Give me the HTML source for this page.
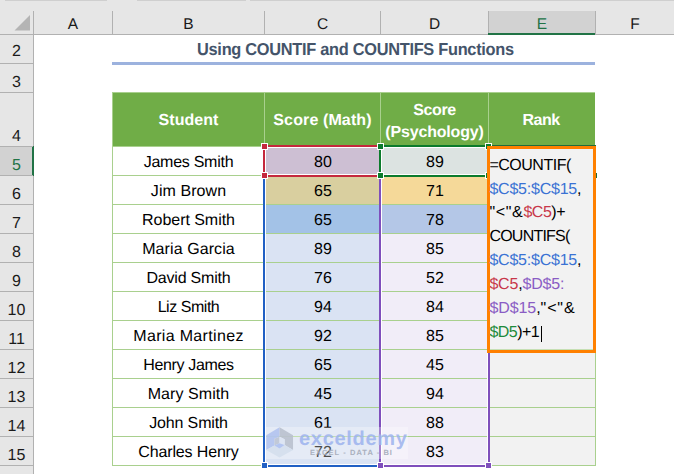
<!DOCTYPE html>
<html><head><meta charset="utf-8"><title>COUNTIF</title>
<style>
html,body{margin:0;padding:0;background:#fff;}
body{width:674px;height:474px;overflow:hidden;position:relative;font-family:"Liberation Sans",sans-serif;color:#000;text-rendering:geometricPrecision;}
div,span{box-sizing:border-box;}
.a{position:absolute;}
.hd{position:absolute;background:#e6e6e6;}
.ln{position:absolute;background:#b1b1b1;}
.rn{position:absolute;left:0;width:33px;text-align:center;font-size:16px;line-height:16px;color:#1a1a1a;}
.cl{position:absolute;top:17px;text-align:center;font-size:15.5px;line-height:16px;color:#1a1a1a;}
.c{position:absolute;text-align:center;font-size:16px;line-height:28px;color:#000;white-space:nowrap;}
.gl{position:absolute;background:#a9d08e;}
.th{position:absolute;text-align:center;color:#fff;font-weight:bold;font-size:16px;white-space:nowrap;line-height:22px;}
.hn{position:absolute;width:7px;height:7px;border:1px solid #fff;}
.f{position:absolute;left:489.4px;font-size:16px;line-height:24px;white-space:nowrap;color:#000;}
.bl{color:#3a72d4}.rd{color:#c8384a}.pu{color:#8a5cc4}.gr{color:#1d8a3a}
</style></head><body>

<div class="hd" style="left:0;top:0;width:674px;height:35px"></div>
<div class="hd" style="left:0;top:35px;width:34px;height:439px"></div>
<div class="a" style="left:5px;top:0;width:102px;height:1px;background:#cfcfcf"></div>
<div class="a" style="left:137px;top:0;width:109px;height:1px;background:#cfcfcf"></div>
<div class="a" style="left:250px;top:0;width:424px;height:1px;background:#cfcfcf"></div>
<div class="a" style="left:489px;top:11px;width:106px;height:24px;background:#d2d2d2"></div>
<div class="a" style="left:0;top:147px;width:33px;height:29px;background:#d2d2d2"></div>
<div class="ln" style="left:0;top:34px;width:489px;height:1px"></div>
<div class="ln" style="left:595px;top:34px;width:79px;height:1px"></div>
<div class="ln" style="left:33px;top:11px;width:1px;height:136px"></div>
<div class="ln" style="left:33px;top:176px;width:1px;height:298px"></div>
<div class="ln" style="left:112px;top:11px;width:1px;height:23px"></div>
<div class="ln" style="left:264px;top:11px;width:1px;height:23px"></div>
<div class="ln" style="left:380px;top:11px;width:1px;height:23px"></div>
<div class="ln" style="left:488px;top:11px;width:1px;height:23px"></div>
<div class="ln" style="left:595px;top:11px;width:1px;height:23px"></div>
<div class="a" style="left:488px;top:33px;width:107px;height:2px;background:#217346"></div>
<div class="a" style="left:32px;top:146px;width:2px;height:30px;background:#217346"></div>
<div class="ln" style="left:0;top:63px;width:33px;height:1px"></div>
<div class="ln" style="left:0;top:92px;width:33px;height:1px"></div>
<div class="ln" style="left:0;top:146px;width:33px;height:1px"></div>
<div class="ln" style="left:0;top:175px;width:33px;height:1px"></div>
<div class="ln" style="left:0;top:204px;width:33px;height:1px"></div>
<div class="ln" style="left:0;top:233px;width:33px;height:1px"></div>
<div class="ln" style="left:0;top:262px;width:33px;height:1px"></div>
<div class="ln" style="left:0;top:291px;width:33px;height:1px"></div>
<div class="ln" style="left:0;top:320px;width:33px;height:1px"></div>
<div class="ln" style="left:0;top:349px;width:33px;height:1px"></div>
<div class="ln" style="left:0;top:378px;width:33px;height:1px"></div>
<div class="ln" style="left:0;top:407px;width:33px;height:1px"></div>
<div class="ln" style="left:0;top:436px;width:33px;height:1px"></div>
<div class="ln" style="left:0;top:465px;width:33px;height:1px"></div>
<svg class="a" style="left:14px;top:15px" width="17" height="16" viewBox="0 0 17 16"><polygon points="16,0 16,15.5 0.5,15.5" fill="#b4b4b4"/></svg>
<div class="cl" style="left:34px;width:78px;color:#1a1a1a">A</div>
<div class="cl" style="left:113px;width:151px;color:#1a1a1a">B</div>
<div class="cl" style="left:265px;width:115px;color:#1a1a1a">C</div>
<div class="cl" style="left:381px;width:107px;color:#1a1a1a">D</div>
<div class="cl" style="left:489px;width:106px;color:#217346">E</div>
<div class="cl" style="left:596px;width:78px;color:#1a1a1a">F</div>
<div class="rn" style="top:44px;color:#1a1a1a">2</div>
<div class="rn" style="top:75px;color:#1a1a1a">3</div>
<div class="rn" style="top:129px;color:#1a1a1a">4</div>
<div class="rn" style="top:158px;color:#217346">5</div>
<div class="rn" style="top:187px;color:#1a1a1a">6</div>
<div class="rn" style="top:216px;color:#1a1a1a">7</div>
<div class="rn" style="top:245px;color:#1a1a1a">8</div>
<div class="rn" style="top:274px;color:#1a1a1a">9</div>
<div class="rn" style="top:303px;color:#1a1a1a">10</div>
<div class="rn" style="top:332px;color:#1a1a1a">11</div>
<div class="rn" style="top:361px;color:#1a1a1a">12</div>
<div class="rn" style="top:390px;color:#1a1a1a">13</div>
<div class="rn" style="top:419px;color:#1a1a1a">14</div>
<div class="rn" style="top:448px;color:#1a1a1a">15</div>
<div class="a" style="left:114.4px;top:36.4px;width:482px;height:26px;text-align:center;font-weight:bold;font-size:17.3px;line-height:26px;color:#44546a;white-space:nowrap"><span id="title" style="display:inline-block;transform:scaleX(0.946);letter-spacing:-0.3px">Using COUNTIF and COUNTIFS Functions</span></div>
<div class="a" style="left:112px;top:62px;width:483px;height:3px;background:#9cb2de"></div>
<div class="a" style="left:112px;top:92px;width:483px;height:55px;background:#70ad47;border-top:1px solid #a9d08e;border-left:1px solid #a9d08e"></div>
<div class="a" style="left:264px;top:93px;width:1px;height:53px;background:#a9d08e"></div>
<div class="a" style="left:380px;top:93px;width:1px;height:53px;background:#a9d08e"></div>
<div class="a" style="left:488px;top:93px;width:1px;height:53px;background:#a9d08e"></div>
<div class="th" style="left:113px;width:151px;top:110px"><span id="th1" style="letter-spacing:0.06px;">Student</span></div>
<div class="th" style="left:265px;width:115px;top:110px"><span id="th2" style="letter-spacing:0.12px;">Score (Math)</span></div>
<div class="th" style="left:381px;width:107px;top:100px"><span id="th3a" style="letter-spacing:-0.35px;">Score</span><br><span id="th3b" style="letter-spacing:-0.18px;">(Psychology)</span></div>
<div class="th" style="left:488px;width:106px;top:110px"><span id="th4" style="letter-spacing:-0.48px;">Rank</span></div>
<div class="a" style="left:265px;top:147px;width:115px;height:29px;background:#cdbfd3"></div>
<div class="a" style="left:381px;top:147px;width:107px;height:29px;background:#dce3e1"></div>
<div class="a" style="left:489px;top:147px;width:106px;height:29px;background:#f2f2f2"></div>
<div class="a" style="left:265px;top:176px;width:115px;height:29px;background:#d9cf9f"></div>
<div class="a" style="left:381px;top:176px;width:107px;height:29px;background:#f5d999"></div>
<div class="a" style="left:489px;top:176px;width:106px;height:29px;background:#f2f2f2"></div>
<div class="a" style="left:265px;top:205px;width:115px;height:29px;background:#a3c2e7"></div>
<div class="a" style="left:381px;top:205px;width:107px;height:29px;background:#b4c7e7"></div>
<div class="a" style="left:489px;top:205px;width:106px;height:29px;background:#f2f2f2"></div>
<div class="a" style="left:265px;top:234px;width:115px;height:29px;background:#dae3f3"></div>
<div class="a" style="left:381px;top:234px;width:107px;height:29px;background:#f1edf8"></div>
<div class="a" style="left:489px;top:234px;width:106px;height:29px;background:#f2f2f2"></div>
<div class="a" style="left:265px;top:263px;width:115px;height:29px;background:#dae3f3"></div>
<div class="a" style="left:381px;top:263px;width:107px;height:29px;background:#f1edf8"></div>
<div class="a" style="left:489px;top:263px;width:106px;height:29px;background:#f2f2f2"></div>
<div class="a" style="left:265px;top:292px;width:115px;height:29px;background:#dae3f3"></div>
<div class="a" style="left:381px;top:292px;width:107px;height:29px;background:#f1edf8"></div>
<div class="a" style="left:489px;top:292px;width:106px;height:29px;background:#f2f2f2"></div>
<div class="a" style="left:265px;top:321px;width:115px;height:29px;background:#dae3f3"></div>
<div class="a" style="left:381px;top:321px;width:107px;height:29px;background:#f1edf8"></div>
<div class="a" style="left:489px;top:321px;width:106px;height:29px;background:#f2f2f2"></div>
<div class="a" style="left:265px;top:350px;width:115px;height:29px;background:#dae3f3"></div>
<div class="a" style="left:381px;top:350px;width:107px;height:29px;background:#f1edf8"></div>
<div class="a" style="left:489px;top:350px;width:106px;height:29px;background:#f2f2f2"></div>
<div class="a" style="left:265px;top:379px;width:115px;height:29px;background:#dae3f3"></div>
<div class="a" style="left:381px;top:379px;width:107px;height:29px;background:#f1edf8"></div>
<div class="a" style="left:489px;top:379px;width:106px;height:29px;background:#f2f2f2"></div>
<div class="a" style="left:265px;top:408px;width:115px;height:29px;background:#dae3f3"></div>
<div class="a" style="left:381px;top:408px;width:107px;height:29px;background:#f1edf8"></div>
<div class="a" style="left:489px;top:408px;width:106px;height:29px;background:#f2f2f2"></div>
<div class="a" style="left:265px;top:437px;width:115px;height:29px;background:#dae3f3"></div>
<div class="a" style="left:381px;top:437px;width:107px;height:29px;background:#f1edf8"></div>
<div class="a" style="left:489px;top:437px;width:106px;height:29px;background:#f2f2f2"></div>
<div class="gl" style="left:112px;top:146px;width:484px;height:1px"></div>
<div class="gl" style="left:112px;top:175px;width:484px;height:1px"></div>
<div class="gl" style="left:112px;top:204px;width:484px;height:1px"></div>
<div class="gl" style="left:112px;top:233px;width:484px;height:1px"></div>
<div class="gl" style="left:112px;top:262px;width:484px;height:1px"></div>
<div class="gl" style="left:112px;top:291px;width:484px;height:1px"></div>
<div class="gl" style="left:112px;top:320px;width:484px;height:1px"></div>
<div class="gl" style="left:112px;top:349px;width:484px;height:1px"></div>
<div class="gl" style="left:112px;top:378px;width:484px;height:1px"></div>
<div class="gl" style="left:112px;top:407px;width:484px;height:1px"></div>
<div class="gl" style="left:112px;top:436px;width:484px;height:1px"></div>
<div class="gl" style="left:112px;top:465px;width:484px;height:1px"></div>
<div class="gl" style="left:112px;top:146px;width:1px;height:320px"></div>
<div class="gl" style="left:264px;top:146px;width:1px;height:320px"></div>
<div class="gl" style="left:380px;top:146px;width:1px;height:320px"></div>
<div class="gl" style="left:488px;top:146px;width:1px;height:320px"></div>
<div class="gl" style="left:595px;top:146px;width:1px;height:320px"></div>
<div class="c" style="left:113px;width:151px;top:149px"><span id="n0" style="letter-spacing:-0.26px;">James Smith</span></div>
<div class="c" style="left:265.4px;width:115px;top:149px">80</div>
<div class="c" style="left:381.4px;width:107px;top:149px">89</div>
<div class="c" style="left:113px;width:151px;top:178px"><span id="n1" style="letter-spacing:0.07px;">Jim Brown</span></div>
<div class="c" style="left:265.4px;width:115px;top:178px">65</div>
<div class="c" style="left:381.4px;width:107px;top:178px">71</div>
<div class="c" style="left:113px;width:151px;top:207px"><span id="n2" style="letter-spacing:-0.05px;">Robert Smith</span></div>
<div class="c" style="left:265.4px;width:115px;top:207px">65</div>
<div class="c" style="left:381.4px;width:107px;top:207px">78</div>
<div class="c" style="left:113px;width:151px;top:236px"><span id="n3" style="letter-spacing:0.09px;">Maria Garcia</span></div>
<div class="c" style="left:265.4px;width:115px;top:236px">89</div>
<div class="c" style="left:381.4px;width:107px;top:236px">85</div>
<div class="c" style="left:113px;width:151px;top:265px"><span id="n4" style="letter-spacing:-0.19px;">David Smith</span></div>
<div class="c" style="left:265.4px;width:115px;top:265px">76</div>
<div class="c" style="left:381.4px;width:107px;top:265px">52</div>
<div class="c" style="left:113px;width:151px;top:294px"><span id="n5" style="letter-spacing:-0.46px;">Liz Smith</span></div>
<div class="c" style="left:265.4px;width:115px;top:294px">94</div>
<div class="c" style="left:381.4px;width:107px;top:294px">84</div>
<div class="c" style="left:113px;width:151px;top:323px"><span id="n6" style="letter-spacing:0.33px;">Maria Martinez</span></div>
<div class="c" style="left:265.4px;width:115px;top:323px">92</div>
<div class="c" style="left:381.4px;width:107px;top:323px">85</div>
<div class="c" style="left:113px;width:151px;top:352px"><span id="n7" style="letter-spacing:-0.34px;">Henry James</span></div>
<div class="c" style="left:265.4px;width:115px;top:352px">65</div>
<div class="c" style="left:381.4px;width:107px;top:352px">45</div>
<div class="c" style="left:113px;width:151px;top:381px"><span id="n8" style="letter-spacing:0.07px;">Mary Smith</span></div>
<div class="c" style="left:265.4px;width:115px;top:381px">45</div>
<div class="c" style="left:381.4px;width:107px;top:381px">94</div>
<div class="c" style="left:113px;width:151px;top:410px"><span id="n9" style="letter-spacing:-0.14px;">John Smith</span></div>
<div class="c" style="left:265.4px;width:115px;top:410px">61</div>
<div class="c" style="left:381.4px;width:107px;top:410px">88</div>
<div class="c" style="left:113px;width:151px;top:439px"><span id="n10" style="letter-spacing:-0.15px;">Charles Henry</span></div>
<div class="c" style="left:265.4px;width:115px;top:439px">72</div>
<div class="c" style="left:381.4px;width:107px;top:439px">83</div>
<div class="a" style="left:265px;top:147px;width:1px;height:317px;background:#fff"></div>
<div class="a" style="left:381px;top:147px;width:1px;height:317px;background:#fff"></div>
<div class="a" style="left:487px;top:353px;width:1px;height:111px;background:#fff"></div>
<div class="a" style="left:265px;top:464px;width:114px;height:1px;background:#fff"></div>
<div class="a" style="left:381px;top:464px;width:106px;height:1px;background:#fff"></div>
<div class="a" style="left:265px;top:147px;width:114px;height:1px;background:#fff"></div>
<div class="a" style="left:265px;top:174px;width:114px;height:1px;background:#fff"></div>
<div class="a" style="left:381px;top:147px;width:106px;height:1px;background:#fff"></div>
<div class="a" style="left:381px;top:174px;width:106px;height:1px;background:#fff"></div>
<div class="a" style="left:263px;top:177px;width:2px;height:290px;background:#2160c4"></div>
<div class="a" style="left:263px;top:465px;width:116px;height:2px;background:#2160c4"></div>
<div class="a" style="left:379px;top:177px;width:2px;height:290px;background:#7f4fbc"></div>
<div class="a" style="left:379px;top:465px;width:111px;height:2px;background:#7f4fbc"></div>
<div class="a" style="left:488px;top:353px;width:2px;height:114px;background:#7f4fbc"></div>
<div class="a" style="left:263px;top:145px;width:116px;height:2px;background:#c5283d"></div>
<div class="a" style="left:263px;top:145px;width:2px;height:32px;background:#c5283d"></div>
<div class="a" style="left:263px;top:175px;width:116px;height:2px;background:#c5283d"></div>
<div class="a" style="left:379px;top:145px;width:110px;height:2px;background:#0c7b2c"></div>
<div class="a" style="left:379px;top:145px;width:2px;height:32px;background:#0c7b2c"></div>
<div class="a" style="left:379px;top:175px;width:110px;height:2px;background:#0c7b2c"></div>
<div class="a" style="left:489px;top:145px;width:107px;height:1px;background:#1e6b3c"></div>
<div class="a" style="left:596px;top:173px;width:1px;height:5px;background:#1e6b3c"></div>
<div class="hn" style="left:261px;top:143px;background:#c5283d"></div>
<div class="hn" style="left:261px;top:172px;background:#c5283d"></div>
<div class="hn" style="left:377px;top:143px;background:#0c7b2c"></div>
<div class="hn" style="left:377px;top:172px;background:#0c7b2c"></div>
<div class="hn" style="left:485px;top:143px;background:#0c7b2c"></div>
<div class="hn" style="left:485px;top:172px;background:#0c7b2c"></div>
<div class="hn" style="left:261px;top:462px;background:#2160c4"></div>
<div class="hn" style="left:377px;top:462px;background:#7f4fbc"></div>
<div class="hn" style="left:485px;top:462px;background:#7f4fbc"></div>
<div class="a" style="left:266px;top:427px;width:142px;height:32px;background:rgba(255,255,255,0.3)"></div>
<svg class="a" style="left:262px;top:422px;opacity:.88" width="40" height="40" viewBox="0 0 40 40">
<polygon points="17.55,5.14 4.26,13.30 4.26,27.93 12.41,23.49 12.41,16.84 17.55,14.63" fill="#b1c3f0"/>
<polygon points="17.55,5.14 31.03,13.30 31.03,27.93 22.61,23.05 22.61,17.29 17.55,14.63" fill="#b9c0ce"/>
<polygon points="4.26,27.93 17.55,35.46 31.03,27.93 22.61,23.05 17.55,26.60 12.41,23.49" fill="#d4dfee"/>
<polygon points="12.41,16.84 17.55,14.63 17.55,21.28 12.41,23.49" fill="#bdc5d4"/>
<polygon points="17.55,14.63 22.61,17.29 22.61,23.05 17.55,21.28" fill="#dde5f3"/>
<polygon points="12.41,23.49 17.55,21.28 22.61,23.05 17.55,26.60" fill="#adc0f1"/>
</svg>
<div class="a" style="left:299px;top:427px;font-weight:bold;font-size:20px;line-height:24px;color:#9db3ee;opacity:.85;white-space:nowrap;"><span id="wm1" style="letter-spacing:0.70px;">exceldemy</span></div>
<div class="a" style="left:310px;top:448px;font-weight:bold;font-size:7.5px;line-height:10px;color:#a3aab8;opacity:.9;white-space:nowrap;"><span id="wm2" style="letter-spacing:1.05px;">EXCEL - DATA - BI</span></div>

<div class="a" style="left:487px;top:146px;width:109px;height:207px;background:#f2f2f2;border:3px solid #ff8000"></div>
<div class="a" style="left:490px;top:349px;width:103px;height:1px;background:#c6dfb4"></div>
<div class="f" style="top:154px"><span id="f0" style="letter-spacing:-0.49px;">=COUNTIF(</span></div>
<div class="f" style="top:178px"><span id="f1" style="letter-spacing:-0.22px;"><span class="bl">$C$5:$C$15</span>,</span></div>
<div class="f" style="top:201px"><span id="f2" style=""><span id="f2a" style="letter-spacing:0.66px;">"&lt;"&amp;</span><span id="f2b" style="letter-spacing:-0.49px;"><span class="rd">$C5</span>)+</span></span></div>
<div class="f" style="top:225px"><span id="f3" style="letter-spacing:-0.77px;">COUNTIFS(</span></div>
<div class="f" style="top:249px"><span id="f4" style="letter-spacing:-0.22px;"><span class="bl">$C$5:$C$15</span>,</span></div>
<div class="f" style="top:273px"><span id="f5" style="letter-spacing:-0.19px;"><span class="rd">$C5</span>,<span class="pu">$D$5:</span></span></div>
<div class="f" style="top:297px"><span id="f6" style=""><span id="f6a" style="letter-spacing:-0.07px;"><span class="pu">$D$15</span>,</span><span id="f6b" style="letter-spacing:0.86px;">"&lt;"&amp;</span></span></div>
<div class="f" style="top:321px"><span id="f7" style="letter-spacing:-0.54px;"><span class="gr">$D5</span>)+1</span></div>
<div class="a" style="left:541px;top:326px;width:1px;height:16px;background:#000"></div>
</body></html>
